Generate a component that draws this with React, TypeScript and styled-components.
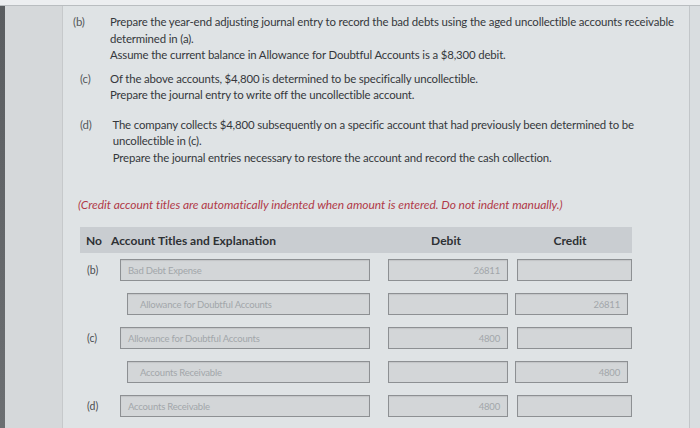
import React from "react";
import styled, { createGlobalStyle } from "styled-components";

const Global = createGlobalStyle`
  html, body { margin: 0; padding: 0; }
  body {
    width: 700px; height: 428px; overflow: hidden;
    background: #dde1e4;
    font-family: Lato, "Open Sans", "Liberation Sans", sans-serif;
  }
`;

const Screen = styled.div`
  width: 700px; height: 428px;
  display: flex; flex-direction: column;
  overflow: hidden;
`;

const TopBand = styled.div`
  height: 5px; flex: none;
  background: #eceef0;
  border-bottom: 1px solid #b9bdc0;
`;

const Body = styled.div`
  flex: 1; display: flex; min-height: 0;
`;

const Bezel = styled.div`
  width: 5px; flex: none;
  background: linear-gradient(#5a5d60, #6c6f72);
`;

const Gutter = styled.div`
  width: 57px; flex: none;
  background: #d5d8da;
  border-right: 1px solid #c6c9cb;
`;

const Main = styled.div`
  flex: 1; padding: 8px 0 0 10px;
  display: flex; flex-direction: column;
  background: #dfe3e5;
`;

const RightEdge = styled.div`
  width: 10px; flex: none;
  background: #d9dde0;
  border-left: 1px solid #c2c6c9;
`;

const Question = styled.div<{ $mt?: number }>`
  display: grid;
  grid-template-columns: 37px 1fr;
  margin-top: ${(p) => p.$mt ?? 0}px;
  color: #35383c;
  font-size: 11.4px;
  line-height: 16.5px;
  letter-spacing: -0.15px;
`;

const QLabel = styled.div<{ $pl?: number }>`
  padding-left: ${(p) => p.$pl ?? 0}px;
  color: #55585c;
`;

const QText = styled.div`
  max-width: 590px;
`;

const Note = styled.div`
  margin: 31px 0 0 5px;
  color: #b13a48;
  font-style: italic;
  font-size: 12px;
  letter-spacing: -0.05px;
`;

const Table = styled.div`
  margin: 15px 0 0 7px;
  width: 552px;
  display: flex; flex-direction: column;
`;

const Header = styled.div`
  display: grid;
  grid-template-columns: 31px 273px 124px 124px;
  align-items: center;
  height: 26px;
  background: #c9cdd1;
  color: #2e3134;
  font-weight: 700;
  font-size: 12px;
`;

const HCell = styled.div<{ $center?: boolean; $pl?: number }>`
  padding-left: ${(p) => p.$pl ?? 0}px;
  text-align: ${(p) => (p.$center ? "center" : "left")};
`;

const Row = styled.div<{ $mt: number }>`
  display: grid;
  grid-template-columns: 40px 250px 138px 124px;
  align-items: center;
  margin-top: ${(p) => p.$mt}px;
  height: 22px;
`;

const RLabel = styled.div`
  font-size: 10.5px;
  color: #4a4d51;
  padding-left: 7px;
`;

const Field = styled.div<{ $indent?: number; $right?: boolean; $ml?: number; $w?: number }>`
  box-sizing: border-box;
  height: 22px;
  width: ${(p) => (p.$w ? `${p.$w}px` : "auto")};
  margin-left: ${(p) => (p.$ml ?? 0) + (p.$indent ?? 0)}px;
  background: #d3d6d8;
  border: 1px solid #8d9093;
  box-shadow: inset 0 1px 1px rgba(0,0,0,0.08);
  display: flex; align-items: center;
  justify-content: ${(p) => (p.$right ? "flex-end" : "flex-start")};
  padding: 0 ${(p) => (p.$indent ? 12 : 7)}px;
  font-size: 9.5px;
  color: #a2a6aa;
  letter-spacing: -0.2px;
  white-space: nowrap;
  overflow: hidden;
`;

type R = { label?: string; account: string; indent: boolean; debit?: string; credit?: string; mt: number };

const rows: R[] = [
  { label: "(b)", account: "Bad Debt Expense", indent: false, debit: "26811", mt: 6 },
  { label: "", account: "Allowance for Doubtful Accounts", indent: true, credit: "26811", mt: 12 },
  { label: "(c)", account: "Allowance for Doubtful Accounts", indent: false, debit: "4800", mt: 12 },
  { label: "", account: "Accounts Receivable", indent: true, credit: "4800", mt: 12 },
  { label: "(d)", account: "Accounts Receivable", indent: false, debit: "4800", mt: 12 },
  { label: "", account: "", indent: false, mt: 11 },
];

export default function App() {
  return (
    <Screen>
      <Global />
      <TopBand />
      <Body>
        <Bezel />
        <Gutter />
        <Main>
          <Question>
            <QLabel>(b)</QLabel>
            <QText>
              Prepare the year-end adjusting journal entry to record the bad debts using the aged uncollectible accounts receivable
              determined in (a).
              <br />
              Assume the current balance in Allowance for Doubtful Accounts is a $8,300 debit.
            </QText>
          </Question>
          <Question $mt={7}>
            <QLabel $pl={7}>(c)</QLabel>
            <QText>
              Of the above accounts, $4,800 is determined to be specifically uncollectible.
              <br />
              Prepare the journal entry to write off the uncollectible account.
            </QText>
          </Question>
          <Question $mt={13}>
            <QLabel $pl={7}>(d)</QLabel>
            <QText>
              &nbsp;The company collects $4,800 subsequently on a specific account that had previously been determined to be
              <br />
              &nbsp;uncollectible in (c).
              <br />
              &nbsp;Prepare the journal entries necessary to restore the account and record the cash collection.
            </QText>
          </Question>
          <Note>(Credit account titles are automatically indented when amount is entered. Do not indent manually.)</Note>
          <Table>
            <Header>
              <HCell $pl={6}>No</HCell>
              <HCell>Account Titles and Explanation</HCell>
              <HCell $center>Debit</HCell>
              <HCell $center>Credit</HCell>
            </Header>
            {rows.map((r, i) => (
              <Row key={i} $mt={r.mt}>
                <RLabel>{r.label}</RLabel>
                <Field $indent={r.indent ? 7 : 0}>{r.account}</Field>
                <Field $ml={18} $w={120} $right>{r.debit}</Field>
                <Field $ml={r.indent ? 7 : 9} $w={r.indent ? 113 : 115} $right>{r.credit}</Field>
              </Row>
            ))}
          </Table>
        </Main>
        <RightEdge />
      </Body>
    </Screen>
  );
}
